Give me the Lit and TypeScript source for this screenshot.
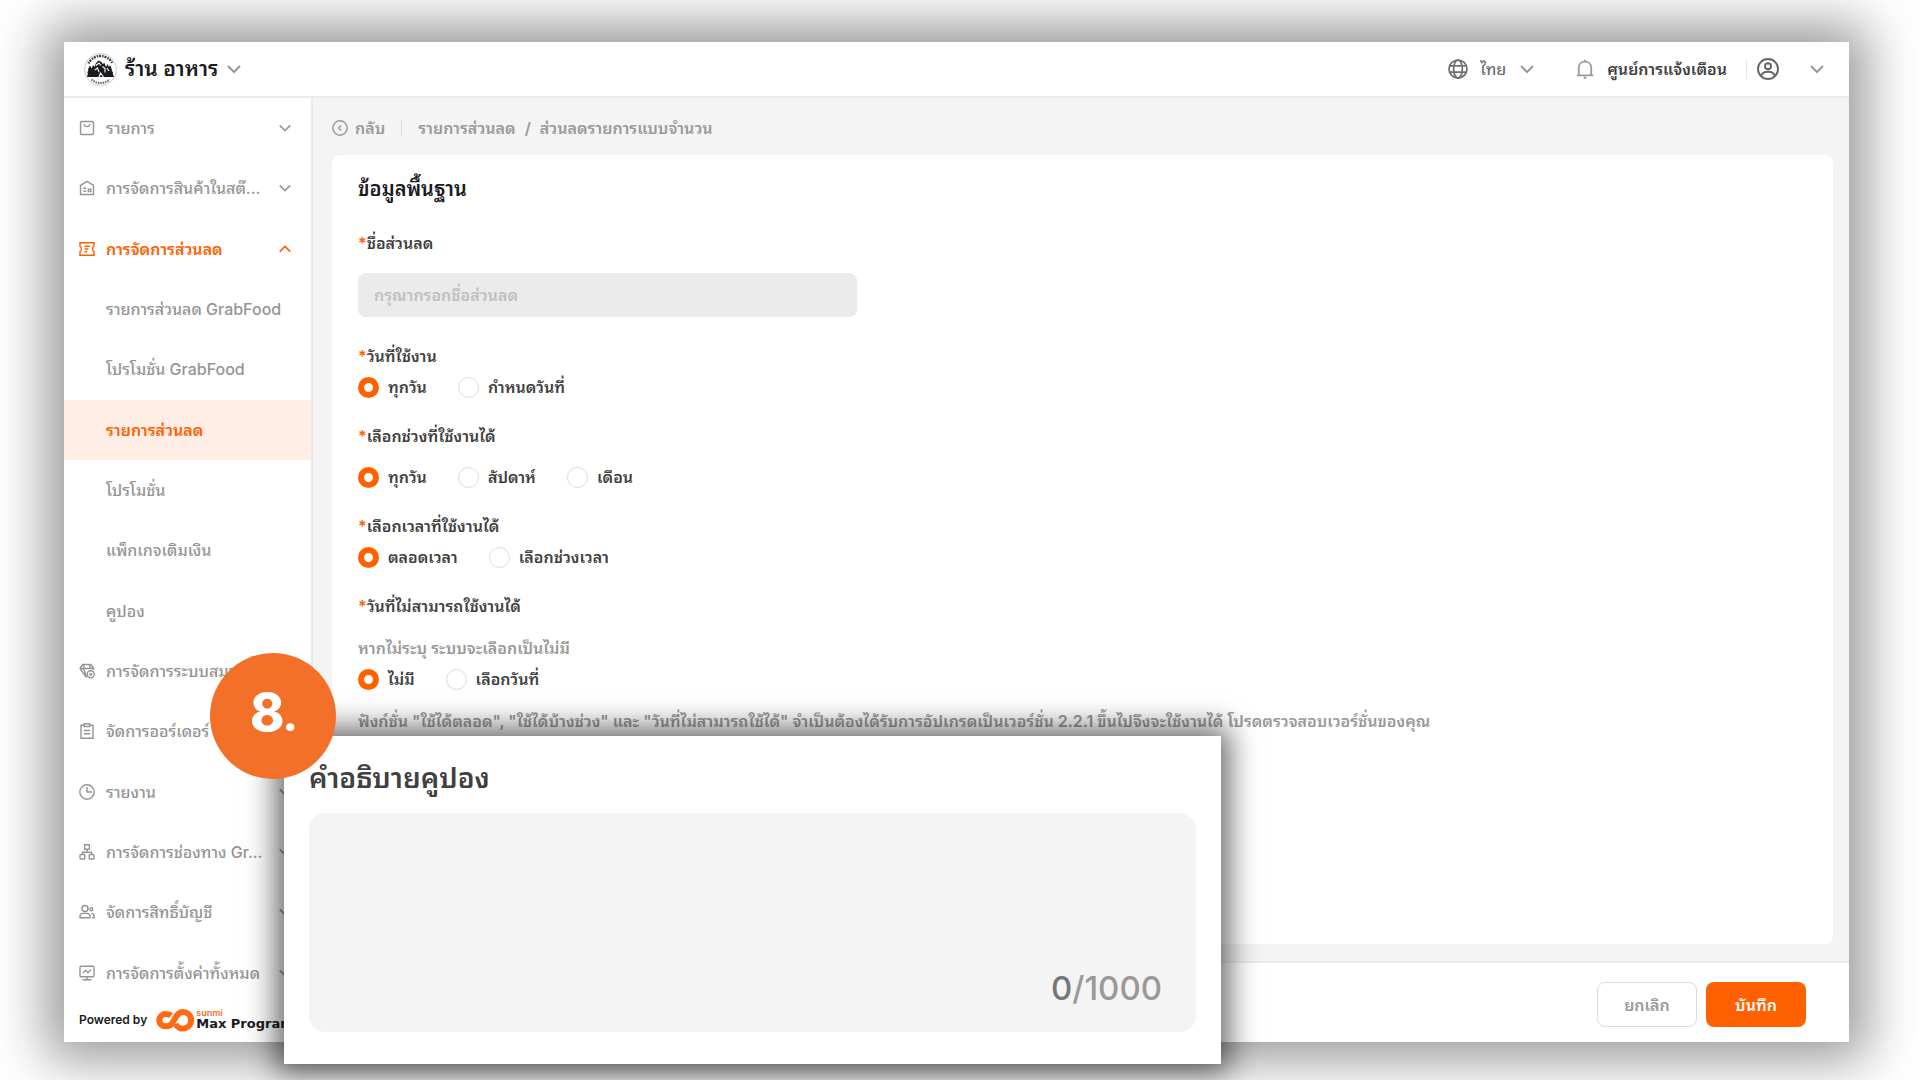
import { LitElement, html, css, svg, nothing, type SVGTemplateResult } from "lit";
import { customElement, property, state } from "lit/decorators.js";
import { classMap } from "lit/directives/class-map.js";

const icons: Record<string, SVGTemplateResult> = {
  bag: svg`<rect x="1.5" y="1.5" width="13" height="13" rx="1"/><path d="M5 4.2c.4 1.6 1.500 2.400 3 2.400s2.600-.8 3-2.400"/>`,
  store: svg`<path d="M1.500 14.500V5.300L8 1.300l6.500 4v9.200z"/><path d="M4.300 8.300h3M4.300 11.300h3" stroke-width="1.600"/><path d="M9.300 9.300h2.500v2.300H9.300z"/>`,
  coupon: svg`<path d="M1 1.800h14v3.600c-1 .5-1.500 1.400-1.500 2.600s.5 2.100 1.500 2.600v3.600H1v-3.600c1-.5 1.500-1.400 1.500-2.600S2 5.900 1 5.400z"/><path d="M5.500 5.200h5.500M5.500 8h4M5.500 10.800h2.500"/>`,
  member: svg`<path d="M7.500 14.500 1 5.500l2.600-4h8.200l3 4-.7 1.200M1 5.500h13.500M5.300 1.700 4.600 5.500 7.500 14M10.400 1.700l1 3.800"/><circle cx="11.700" cy="11.300" r="3.500"/><circle cx="11.700" cy="11.300" r=".9"/>`,
  order: svg`<path d="M5 2.200H2v13h12v-13h-3"/><path d="M5.300.8h5.400v2.700H5.300zM4.800 7.500h6.400M4.800 10.800h6.400"/>`,
  report: svg`<circle cx="8" cy="8" r="7.200"/><path d="M8 3v5h5"/>`,
  channel: svg`<path d="M5.600.8h4.800v4.400H5.600zM8 5.200v3M3.400 10.500V8.200h9.200v2.300"/><rect x="1" y="10.500" width="4.800" height="4.500" rx=".8"/><rect x="10.200" y="10.500" width="4.800" height="4.500" rx=".8"/>`,
  people: svg`<circle cx="6" cy="4.500" r="3"/><circle cx="12.300" cy="5.300" r="1.500"/><path d="M1 13.800v-1.500c0-1.800 1.200-2.900 3-2.900h4c1.800 0 3 1.100 3 2.900v1.500zM12.500 9.200c1.600.2 2.600 1.300 2.600 3v1.500h-2"/>`,
  monitor: svg`<rect x="1" y="1.300" width="14" height="10.500" rx="1"/><path d="M4 8l2.500-2.700L9 7.800l3-3.300M8 12v2.500M3.500 14.700h9"/>`,
  globe: svg`<circle cx="8" cy="8" r="7.200"/><ellipse cx="8" cy="8" rx="3.500" ry="7.200"/><path d="M1.500 5.500h13M1.500 10.500h13"/>`,
  bell: svg`<path d="M1.500 13h13M3 13V7c0-3 2-4.900 5-4.900S13 4 13 7v6M8 .500v1.600"/><path d="M7 15h2" stroke-width="1.600"/>`,
  user: svg`<circle cx="8" cy="8" r="7.300"/><circle cx="8" cy="6" r="2.200"/><path d="M3 13c.6-2 2.500-3 5-3s4.400 1 5 3"/>`,
  back: svg`<circle cx="8" cy="8" r="7.200"/><path d="M9.200 5.400 6.600 8l2.600 2.600"/>`,
  down: svg`<path d="M2 5 8 11l6-6"/>`,
  up: svg`<path d="M2 11 8 5l6 6"/>`,
};

@customElement("ui-icon")
export class UiIcon extends LitElement {
  @property() name = "";
  static styles = css`
    :host { display: block; flex: none; width: 16px; height: 16px; }
    .glyph { display: block; width: 100%; height: 100%; fill: none; stroke: currentColor; stroke-width: var(--stroke, 1.4); }
  `;
  render() {
    return html`<svg class="glyph" viewBox="0 0 16 16" aria-hidden="true">${icons[this.name] ?? nothing}</svg>`;
  }
}

interface Entry { text: string; icon?: string; open?: boolean; current?: boolean }

const menu: Entry[] = [
  { text: "รายการ", icon: "bag" },
  { text: "การจัดการสินค้าในสต๊...", icon: "store" },
  { text: "การจัดการส่วนลด", icon: "coupon", open: true },
  { text: "รายการส่วนลด GrabFood" },
  { text: "โปรโมชั่น GrabFood" },
  { text: "รายการส่วนลด", current: true },
  { text: "โปรโมชั่น" },
  { text: "แพ็กเกจเติมเงิน" },
  { text: "คูปอง" },
  { text: "การจัดการระบบสมาชิก", icon: "member" },
  { text: "จัดการออร์เดอร์", icon: "order" },
  { text: "รายงาน", icon: "report" },
  { text: "การจัดการช่องทาง Gr...", icon: "channel" },
  { text: "จัดการสิทธิ์บัญชี", icon: "people" },
  { text: "การจัดการตั้งค่าทั้งหมด", icon: "monitor" },
];

interface Group { id: string; label: string; options: string[]; hint?: string; roomy?: boolean }

const groups: Group[] = [
  { id: "days", label: "วันที่ใช้งาน", options: ["ทุกวัน", "กำหนดวันที่"] },
  { id: "period", label: "เลือกช่วงที่ใช้งานได้", options: ["ทุกวัน", "สัปดาห์", "เดือน"], roomy: true },
  { id: "time", label: "เลือกเวลาที่ใช้งานได้", options: ["ตลอดเวลา", "เลือกช่วงเวลา"] },
  { id: "blocked", label: "วันที่ไม่สามารถใช้งานได้", options: ["ไม่มี", "เลือกวันที่"], hint: "หากไม่ระบุ ระบบจะเลือกเป็นไม่มี" },
];

@customElement("app-root")
export class AppRoot extends LitElement {
  @state() private note = "";

  static styles = css`
    :host {
      display: block;
      font-family: Inter, "Noto Sans Thai Looped", "Noto Sans Thai", Loma, Garuda, sans-serif;
      font-size: 16px;
      font-weight: 500;
      line-height: 24px;
      color: #404040;
      background: #fff;
    }
    *, *::before { box-sizing: border-box; }
    button, input, select, textarea { font: inherit; color: inherit; margin: 0; }
    button { border: 0; padding: 0; background: none; cursor: pointer; }
    a { color: inherit; text-decoration: none; }
    h1, h2, p { margin: 0; font-size: inherit; font-weight: inherit; }

    .stage { position: relative; display: flex; min-height: 100vh; padding: 42px 71px 38px 64px; overflow: hidden; }
    .window { flex: 1; display: flex; flex-direction: column; min-width: 0; background: #fff; box-shadow: 0 0 50px 18px rgba(0, 0, 0, 0.4); }

    .topbar { display: flex; align-items: center; justify-content: space-between; height: 56px; padding: 0 24px 0 20px; border-bottom: 2px solid #ebebeb; }
    .shop { display: flex; align-items: center; gap: 8px; font-size: 21px; font-weight: 600; color: #1a1a1f; }
    .crest { width: 33px; height: 33px; flex: none; }
    .chevron { width: 16px; height: 16px; color: #999; --stroke: 2; }
    .tools { display: flex; align-items: center; }
    .language { display: flex; align-items: center; gap: 12px; color: #707070; }
    .language ui-icon:first-child { width: 20px; height: 20px; }
    .language select { appearance: none; border: 0; padding: 0; background: none; }
    .alerts { display: flex; align-items: center; gap: 12px; margin-left: 40px; padding-right: 19px; border-right: 1px solid #e6e6e6; height: 20px; font-weight: 600; }
    .alerts ui-icon { width: 20px; height: 20px; color: #999; }
    .account { display: flex; align-items: center; gap: 30px; margin-left: 10px; }
    .account ui-icon:first-child { width: 22px; height: 22px; color: #666; }

    .body { flex: 1; display: flex; min-height: 0; }
    .side { flex: none; display: flex; flex-direction: column; width: 249px; border-right: 2px solid #e9e9e9; }
    .menu { flex: 1; display: grid; grid-auto-rows: 1fr; }
    .entry { display: flex; align-items: center; gap: 11px; padding: 0 19px 0 15px; min-height: 48px; color: #949494; white-space: nowrap; }
    .entry .label { flex: 1; }
    .entry .chevron { width: 14px; height: 14px; }
    .entry.sub { padding-left: 42px; }
    .entry.open, .entry.current { color: #ff6000; font-weight: 600; }
    .entry.open .chevron { color: #ff6000; }
    .entry.current { background: #ffeee5; }
    .powered { display: flex; align-items: center; gap: 9px; height: 39px; padding: 0 0 6px 15px; font-size: 12px; font-weight: 600; line-height: 16px; color: #1a1a1f; white-space: nowrap; }
    .brand { display: flex; align-items: center; }
    .brand svg { width: 40px; height: 24px; flex: none; }
    .words { display: flex; flex-direction: column; }
    .maker { font-size: 9px; line-height: 8px; color: #f37028; }
    .product { font-family: "DejaVu Sans", sans-serif; font-size: 13px; font-weight: 700; line-height: 14px; }

    .main { flex: 1; display: flex; flex-direction: column; min-width: 0; background: #f4f4f4; }
    .crumbs { display: flex; align-items: center; height: 57px; padding: 3px 19px 0; color: #999; font-weight: 600; }
    .back { display: flex; align-items: center; gap: 7px; padding-right: 16px; margin-right: 16px; border-right: 1px solid #dcdcdc; height: 16px; }
    .slash { padding: 0 9px; }
    .card { flex: 1; margin: 0 16px 17px 19px; padding: 20px 26px; border-radius: 8px; background: #fff; font-weight: 600; }
    .title { font-size: 20px; line-height: 28px; color: #1a1a1f; }
    .field { display: flex; flex-direction: column; gap: 18px; margin: 28px 0 27px; }
    .required::before { content: "*"; color: #ff6000; }
    .text { width: 499px; max-width: 100%; height: 44px; padding: 0 16px; border: 0; border-radius: 8px; background: #ebebeb; }
    .text::placeholder { color: #bfbfbf; opacity: 1; }
    .group { border: 0; margin: 0 0 26px; padding: 0; min-width: 0; }
    .group legend { padding: 0; }
    .hint { margin-top: 18px; color: #999; }
    .options { display: flex; gap: 31px; margin-top: 8px; }
    .options.roomy { margin-top: 18px; }
    .option { display: flex; align-items: center; gap: 9px; height: 22px; }
    .option input { appearance: none; width: 21px; height: 21px; border: 1px solid #dcdcdc; border-radius: 50%; background: #fff; }
    .option input:checked { border: 6px solid #ff6000; }
    .notice { margin-top: -7px; color: #999; }

    .actions { display: flex; justify-content: flex-end; gap: 9px; height: 81px; padding: 19px 43px 0 0; border-top: 2px solid #ebebeb; background: #fff; }
    .button { width: 100px; height: 45px; border-radius: 8px; font-weight: 600; }
    .cancel { border: 1px solid #dcdcdc; color: #999; }
    .save { background: #ff6000; color: #fff; }

    .callout { position: absolute; left: 284px; top: 736px; width: 937px; padding: 22px 25px 32px; background: #fff; box-shadow: 0 0 28px 8px rgba(0, 0, 0, 0.6); }
    .callout label { display: block; margin-bottom: 15px; font-size: 28px; line-height: 40px; font-weight: 600; }
    .area { position: relative; display: flex; }
    .area textarea { flex: 1; height: 219px; padding: 24px; border: 0; border-radius: 16px; background: #f4f4f4; resize: none; }
    .count { position: absolute; right: 34px; bottom: 24px; font-size: 33px; line-height: 40px; color: #999; }
    .typed { color: #777; }
    .step { position: absolute; left: 210px; top: 653px; width: 126px; height: 126px; padding-bottom: 4px; display: flex; align-items: center; justify-content: center; border-radius: 50%; background: #f37028; color: #fff; font-size: 52px; font-weight: 800; line-height: 56px; }
    .dot { font-family: "Open Sans", sans-serif; font-size: 40px; }
  `;

  private entry(item: Entry) {
    const classes = { entry: true, sub: !item.icon, open: !!item.open, current: !!item.current };
    return html`<a href="#" class=${classMap(classes)}>
      ${item.icon ? html`<ui-icon name=${item.icon}></ui-icon>` : nothing}
      <span class="label">${item.text}</span>
      ${item.icon ? html`<ui-icon class="chevron" name=${item.open ? "up" : "down"}></ui-icon>` : nothing}
    </a>`;
  }

  private group(item: Group) {
    return html`<fieldset class="group">
      <legend class="required">${item.label}</legend>
      ${item.hint ? html`<p class="hint">${item.hint}</p>` : nothing}
      <div class=${classMap({ options: true, roomy: !!item.roomy })}>
        ${item.options.map((text, i) => html`<label class="option"><input type="radio" name=${item.id} ?checked=${i === 0} />${text}</label>`)}
      </div>
    </fieldset>`;
  }

  render() {
    return html`<div class="stage">
      <div class="window">
        <header class="topbar">
          <button class="shop">
            <svg class="crest" viewBox="0 0 33 33" aria-hidden="true">
              <circle cx="16.500" cy="16.500" r="16" fill="#fff" stroke="#bbb" stroke-width=".8"/>
              <path d="M4.500 10.500A13.300 13.300 0 0 1 28.500 10.500" fill="none" stroke="#444" stroke-width="2.400" stroke-dasharray="1.500 .8 2.200 1"/>
              <path d="M7.500 26.500A13.300 13.300 0 0 0 25.500 26.500" fill="none" stroke="#666" stroke-width="2" stroke-dasharray="1.500 .9"/>
              <path d="M3 24l1-4-.8-.3 1.300-3-.6-.2 2-4 1.800 3 1.300-3.500 1.500 2 1.500-4 2.500-2.500 3 1.500 1 2 2-1 1.500 4 1.500-3 1.500 3 1-2 2 4.500-.6.200L29.300 20l-.6.300L30 24z" fill="#1c1c20"/>
              <path d="M12 12.500l3-2.500 2 2.500M11 17l2.500-2 1.500 4M18.500 13.500l2.500 2v4M15 24l1.500-4 3 4M23 15l2 3" fill="none" stroke="#fff" stroke-width="1.100"/>
            </svg>
            ร้าน อาหาร
            <ui-icon class="chevron" name="down"></ui-icon>
          </button>
          <div class="tools">
            <div class="language">
              <ui-icon name="globe"></ui-icon>
              <select aria-label="ภาษา"><option>ไทย</option></select>
              <ui-icon class="chevron" name="down"></ui-icon>
            </div>
            <button class="alerts"><ui-icon name="bell"></ui-icon>ศูนย์การแจ้งเตือน</button>
            <button class="account" aria-label="บัญชี">
              <ui-icon name="user"></ui-icon>
              <ui-icon class="chevron" name="down"></ui-icon>
            </button>
          </div>
        </header>
        <div class="body">
          <aside class="side">
            <nav class="menu">${menu.map((item) => this.entry(item))}</nav>
            <div class="powered">
              <span>Powered by</span>
              <span class="brand">
                <svg viewBox="0 0 40 24" aria-hidden="true">
                  <path d="M15 7.500C13.500 6.300 12 6 10.500 6.200a6.100 6.100 0 1 0 0 12c4.500 0 6.200-3.200 8.200-7.200 2-4.200 4.300-7 8.300-7a8.300 8.300 0 1 1-7.600 12" fill="none" stroke="#ff6a13" stroke-width="6"/>
                </svg>
                <span class="words"><span class="maker">sunmi</span><span class="product">Max Program</span></span>
              </span>
            </div>
          </aside>
          <main class="main">
            <nav class="crumbs">
              <a class="back" href="#"><ui-icon name="back"></ui-icon>กลับ</a>
              <a href="#">รายการส่วนลด</a><span class="slash">/</span><span>ส่วนลดรายการแบบจำนวน</span>
            </nav>
            <section class="card">
              <h1 class="title">ข้อมูลพื้นฐาน</h1>
              <div class="field">
                <label class="required" for="name">ชื่อส่วนลด</label>
                <input class="text" id="name" type="text" placeholder="กรุณากรอกชื่อส่วนลด" />
              </div>
              ${groups.map((item) => this.group(item))}
              <p class="notice">ฟังก์ชั่น "ใช้ได้ตลอด", "ใช้ได้บ้างช่วง" และ "วันที่ไม่สามารถใช้ได้" จำเป็นต้องได้รับการอัปเกรดเป็นเวอร์ชั่น 2.2.1 ขึ้นไปจึงจะใช้งานได้ โปรดตรวจสอบเวอร์ชั่นของคุณ</p>
            </section>
            <footer class="actions">
              <button class="button cancel">ยกเลิก</button>
              <button class="button save">บันทึก</button>
            </footer>
          </main>
        </div>
      </div>
      <section class="callout">
        <label for="about">คำอธิบายคูปอง</label>
        <div class="area">
          <textarea id="about" maxlength="1000" .value=${this.note}
            @input=${(e: Event) => (this.note = (e.target as HTMLTextAreaElement).value)}></textarea>
          <span class="count"><span class="typed">${this.note.length}</span>/1000</span>
        </div>
      </section>
      <div class="step"><span>8<span class="dot">.</span></span></div>
    </div>`;
  }
}
